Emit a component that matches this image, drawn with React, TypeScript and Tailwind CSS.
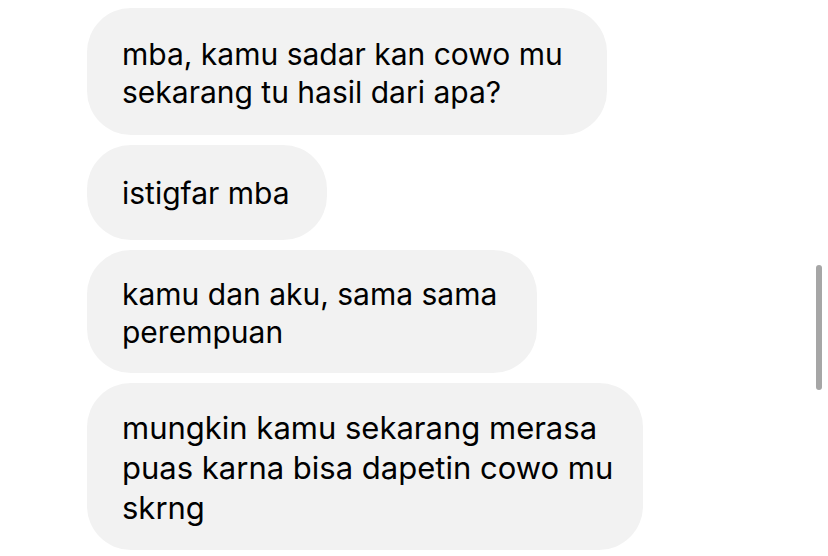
import React from "react";

const bubbles: { lines: string[]; w: string; cls: string }[] = [
  { lines: ["mba, kamu sadar kan cowo mu", "sekarang tu hasil dari apa?"], w: "w-[520px]", cls: "h-[127px] leading-[38px] text-[30px] pt-[3px]" },
  { lines: ["istigfar mba"], w: "w-[240px]", cls: "h-[95px] leading-[38px] text-[30px]" },
  { lines: ["kamu dan aku, sama sama", "perempuan"], w: "w-[450px]", cls: "h-[123px] leading-[38px] text-[30px] pt-[2px]" },
  { lines: ["mungkin kamu sekarang merasa", "puas karna bisa dapetin cowo mu", "skrng"], w: "w-[556px]", cls: "h-[167px] leading-[40px] text-[31px] pt-[2px]" },
];

export default function App() {
  return (
    <div
      className="relative w-[828px] h-[556px] overflow-hidden bg-white"
      style={{ fontFamily: "Inter, 'Noto Sans', sans-serif" }}
    >
      <div className="flex flex-col items-start gap-[10px] pt-[8px] pl-[87px]">
        {bubbles.map((b, i) => (
          <div
            key={i}
            className={`flex flex-col justify-center ${b.w} ${b.cls} rounded-[44px] bg-[#f2f2f2] pl-[35px] text-black`}
          >
            {b.lines.map((l, j) => (
              <div key={j} className="whitespace-nowrap">
                {l}
              </div>
            ))}
          </div>
        ))}
      </div>
      <div className="absolute left-[816px] top-[265px] w-[6px] h-[125px] rounded-full bg-[#a6a6a6]" />
    </div>
  );
}
